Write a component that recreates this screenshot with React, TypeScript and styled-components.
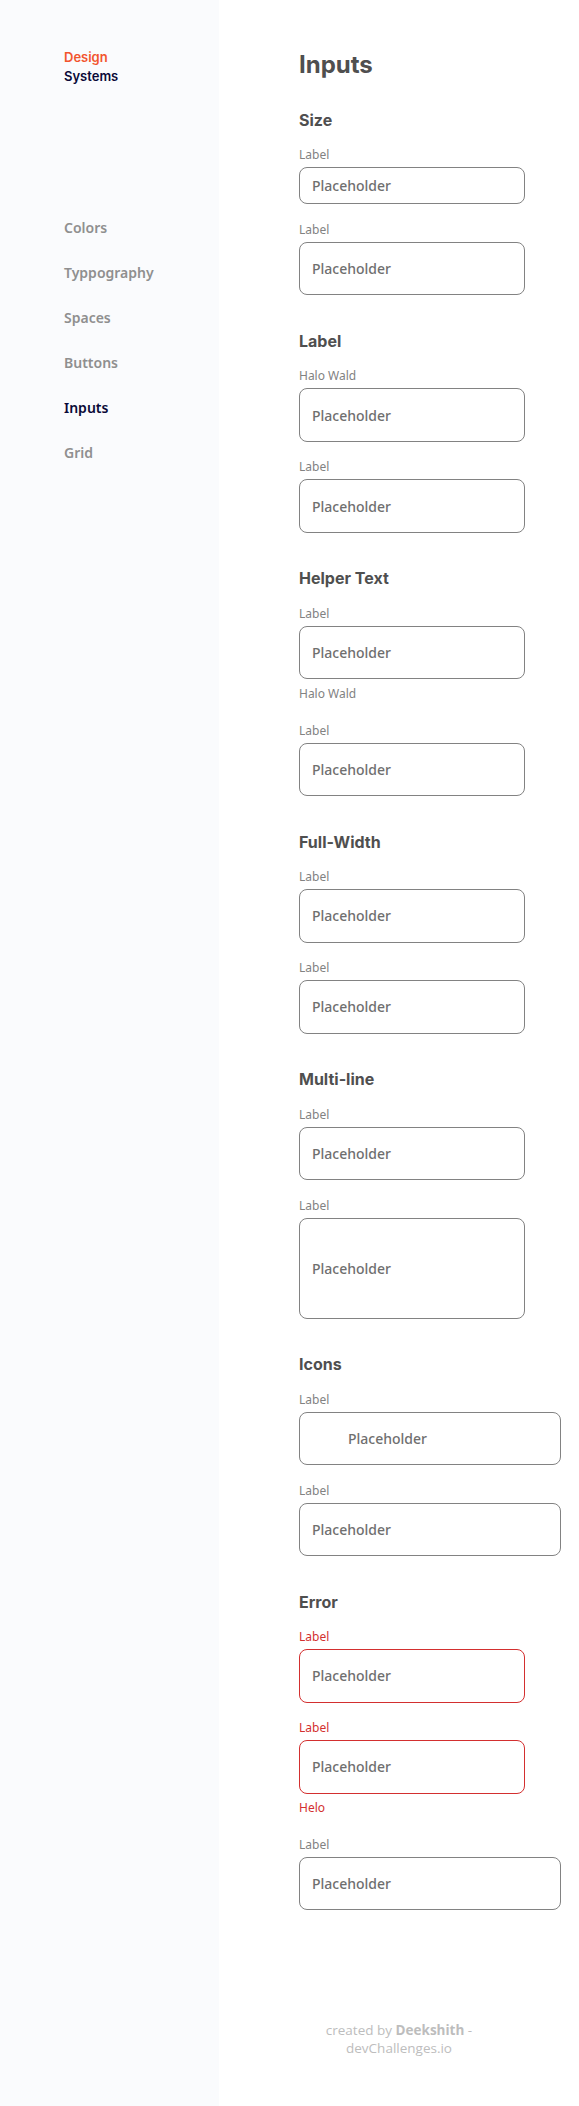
import React from "react";
import styled, { createGlobalStyle } from "styled-components";

const GlobalStyle = createGlobalStyle`
  * { box-sizing: border-box; }
  body {
    margin: 0;
    background: #ffffff;
    font-family: "Noto Sans", "Open Sans", sans-serif;
  }
`;

const Layout = styled.div`
  display: flex;
  min-height: 100vh;
`;

const Sidebar = styled.aside`
  width: 219px;
  flex-shrink: 0;
  background: #fafbfd;
  padding: 47.7px 0 0 64px;
`;

const Logo = styled.div`
  font-family: "Inter", "Lato", sans-serif;
  font-weight: 600;
  font-size: 13px;
  line-height: 19.5px;
  color: #090937;
`;

const LogoAccent = styled.span`
  display: block;
  color: #f2542d;
`;

const Nav = styled.nav`
  margin-top: 131.2px;
  display: flex;
  flex-direction: column;
  gap: 25px;
`;

const NavItem = styled.a<{ $active?: boolean }>`
  font-family: "Noto Sans", sans-serif;
  font-weight: 600;
  font-size: 14px;
  line-height: 20px;
  color: ${(p) => (p.$active ? "#090937" : "#8f8f8f")};
  text-decoration: none;
`;

const Main = styled.main`
  flex: 1;
  display: flex;
  flex-direction: column;
`;

const Content = styled.div`
  padding: 49px 0 0 80px;
`;

const Title = styled.h1`
  margin: 0 0 26.8px;
  font-family: "Inter", "Lato", sans-serif;
  font-weight: 700;
  font-size: 24px;
  line-height: 32px;
  color: #4f4f4f;
`;

const Section = styled.section`
  & + & {
    margin-top: 33.5px;
  }
`;

const SectionTitle = styled.h2`
  margin: 0 0 14.5px;
  font-family: "Inter", "Lato", sans-serif;
  font-weight: 700;
  font-size: 16px;
  line-height: 24px;
  color: #4f4f4f;
`;

const Fields = styled.div`
  display: flex;
  flex-direction: column;
  gap: 16.5px;
`;

const Field = styled.div`
  display: flex;
  flex-direction: column;
`;

const FieldLabel = styled.label<{ $error?: boolean }>`
  font-size: 12px;
  line-height: 17px;
  margin-bottom: 4px;
  color: ${(p) => (p.$error ? "#d32f2f" : "#828282")};
`;

const InputBox = styled.div<{
  $height: number;
  $wide?: boolean;
  $error?: boolean;
  $indent?: boolean;
}>`
  display: flex;
  align-items: center;
  height: ${(p) => p.$height}px;
  width: ${(p) => (p.$wide ? 262 : 226)}px;
  border: 1px solid ${(p) => (p.$error ? "#d32f2f" : "#828282")};
  border-radius: 8px;
  padding-left: ${(p) => (p.$indent ? 48 : 12)}px;
  font-size: 14px;
  font-weight: 500;
  color: #6f6f6f;
  background: #ffffff;
`;

const Helper = styled.span<{ $error?: boolean }>`
  margin: 5.3px 0 3.5px;
  font-size: 12px;
  line-height: 17px;
  color: ${(p) => (p.$error ? "#d32f2f" : "#828282")};
`;

const Footer = styled.footer`
  padding: 111px 0 48px;
  text-align: center;
`;

const FooterText = styled.p`
  margin: 0 auto;
  max-width: 200px;
  font-family: "Open Sans", sans-serif;
  font-weight: 400;
  font-size: 13.5px;
  line-height: 18px;
  color: #bdbdbd;

  strong {
    font-weight: 700;
  }
`;

type FieldSpec = {
  label: string;
  height: number;
  wide?: boolean;
  error?: boolean;
  indent?: boolean;
  helper?: string;
};

type SectionSpec = { title: string; fields: FieldSpec[] };

const M = 53.5;

const sections: SectionSpec[] = [
  {
    title: "Size",
    fields: [
      { label: "Label", height: 37 },
      { label: "Label", height: M },
    ],
  },
  {
    title: "Label",
    fields: [
      { label: "Halo Wald", height: M },
      { label: "Label", height: M },
    ],
  },
  {
    title: "Helper Text",
    fields: [
      { label: "Label", height: M, helper: "Halo Wald" },
      { label: "Label", height: M },
    ],
  },
  {
    title: "Full-Width",
    fields: [
      { label: "Label", height: M },
      { label: "Label", height: M },
    ],
  },
  {
    title: "Multi-line",
    fields: [
      { label: "Label", height: M },
      { label: "Label", height: 101 },
    ],
  },
  {
    title: "Icons",
    fields: [
      { label: "Label", height: M, wide: true, indent: true },
      { label: "Label", height: M, wide: true },
    ],
  },
  {
    title: "Error",
    fields: [
      { label: "Label", height: M, error: true },
      { label: "Label", height: M, error: true, helper: "Helo" },
      { label: "Label", height: M, wide: true },
    ],
  },
];

const navItems = ["Colors", "Typpography", "Spaces", "Buttons", "Inputs", "Grid"];

export default function App() {
  return (
    <>
      <GlobalStyle />
      <Layout>
        <Sidebar>
          <Logo>
            <LogoAccent>Design</LogoAccent>
            Systems
          </Logo>
          <Nav>
            {navItems.map((item) => (
              <NavItem key={item} $active={item === "Inputs"}>
                {item}
              </NavItem>
            ))}
          </Nav>
        </Sidebar>
        <Main>
          <Content>
            <Title>Inputs</Title>
            {sections.map((s) => (
              <Section key={s.title}>
                <SectionTitle>{s.title}</SectionTitle>
                <Fields>
                  {s.fields.map((f, i) => (
                    <Field key={i}>
                      <FieldLabel $error={f.error}>{f.label}</FieldLabel>
                      <InputBox
                        $height={f.height}
                        $wide={f.wide}
                        $error={f.error}
                        $indent={f.indent}
                      >
                        Placeholder
                      </InputBox>
                      {f.helper && <Helper $error={f.error}>{f.helper}</Helper>}
                    </Field>
                  ))}
                </Fields>
              </Section>
            ))}
          </Content>
          <Footer>
            <FooterText>
              created by <strong>Deekshith</strong> - devChallenges.io
            </FooterText>
          </Footer>
        </Main>
      </Layout>
    </>
  );
}
